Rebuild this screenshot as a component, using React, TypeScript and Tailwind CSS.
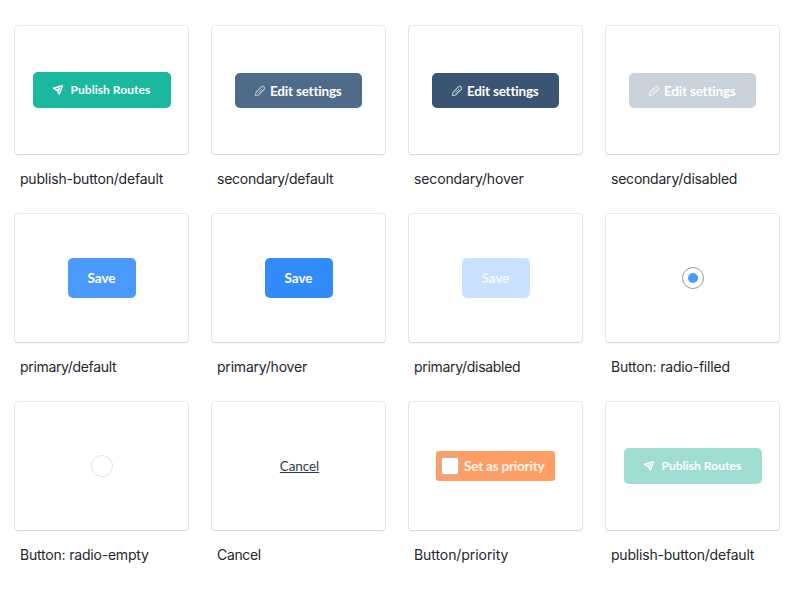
import type { ReactNode } from "react";

function PlaneIcon() {
  return (
    <svg width="12" height="12" viewBox="0 0 12 12" fill="none" stroke="currentColor" strokeWidth="1.5" strokeLinejoin="round" className="shrink-0">
      <path d="M1.5 4.2 10.3 1.7 7.4 10 5.4 6.7Z" />
      <path d="M5.3 6.6 7.8 4.1" />
    </svg>
  );
}

function PencilIcon() {
  return (
    <svg width="12" height="12" viewBox="0 0 12 12" fill="none" stroke="currentColor" strokeWidth="1.15" strokeLinejoin="round" className="shrink-0">
      <path d="M1.4 10.6 2 7.3 7.6 1.7Q8.5 .9 9.5 1.4 10.9 2.2 10.5 3.6 10.4 4.1 10 4.5L4.5 10Z" />
      <path d="M4.2 7.8 8 4" strokeWidth="0.9" />
    </svg>
  );
}

function PublishButton({ color }: { color: string }) {
  return (
    <button className={`flex h-9 w-[138px] items-center rounded-[5px] pl-[19px] font-[Lato,sans-serif] text-[12px] font-bold text-white ${color}`}>
      <PlaneIcon />
      <span className="ml-[7px] whitespace-nowrap tracking-[0.05px]">Publish Routes</span>
    </button>
  );
}

function EditButton({ color, iconColor, textColor = "text-white" }: { color: string; iconColor: string; textColor?: string }) {
  return (
    <button className={`mt-px flex h-[35px] w-[127px] items-center rounded-[5px] pl-[19px] font-[Lato,sans-serif] text-[13.5px] font-bold ${color} ${textColor}`}>
      <span className={iconColor}><PencilIcon /></span>
      <span className="ml-1 pt-0.5 whitespace-nowrap tracking-[-0.2px]">Edit settings</span>
    </button>
  );
}

function SaveButton({ color }: { color: string }) {
  return (
    <button className={`flex h-10 w-[68px] items-center justify-center rounded-[5px] font-[Lato,sans-serif] text-[13.5px] font-bold ${color}`}>
      Save
    </button>
  );
}

const items: { label: string; tracking: string; preview: ReactNode }[] = [
  { label: "publish-button/default", tracking: "tracking-[-0.2px]", preview: <PublishButton color="bg-[#1bb8a0]" /> },
  { label: "secondary/default", tracking: "tracking-[-0.23px]", preview: <EditButton color="bg-[#4f6b8a]" iconColor="text-[#b4c1cb]" /> },
  { label: "secondary/hover", tracking: "tracking-[-0.14px]", preview: <EditButton color="bg-[#3a5573]" iconColor="text-[#b4c4c8]" /> },
  { label: "secondary/disabled", tracking: "tracking-[-0.22px]", preview: <EditButton color="bg-[#cad2dc]" iconColor="text-[#edf1f3]" /> },
  { label: "primary/default", tracking: "tracking-[-0.33px]", preview: <SaveButton color="bg-[#4a9afb] text-white" /> },
  { label: "primary/hover", tracking: "tracking-[-0.2px]", preview: <SaveButton color="bg-[#318bfa] text-white" /> },
  { label: "primary/disabled", tracking: "tracking-[-0.3px]", preview: <SaveButton color="bg-[#c8e1ff] text-[#f6faff]" /> },
  {
    label: "Button: radio-filled",
    tracking: "tracking-[-0.2px]",
    preview: (
      <span className="ml-px flex size-[22px] items-center justify-center rounded-full border border-[#8d9da5]">
        <span className="size-[10px] rounded-full bg-[#4a9afb]" />
      </span>
    ),
  },
  { label: "Button: radio-empty", tracking: "tracking-[-0.2px]", preview: <span className="ml-px size-[22px] rounded-full border border-[#dde3e4]" /> },
  { label: "Cancel", tracking: "tracking-[-0.35px]", preview: <button className="ml-0.5 font-[Lato,sans-serif] text-[13.5px] tracking-[-0.1px] text-[#2e3c49] underline">Cancel</button> },
  {
    label: "Button/priority",
    tracking: "tracking-[-0.07px]",
    preview: (
      <button className="flex h-[30px] w-[119px] items-center rounded-[3px] bg-[#ff9e64] pl-[5px] font-[Lato,sans-serif] text-[13.5px] font-bold text-[#fff5ef]">
        <span className="size-[18px] rounded-[3px] border border-[#a5bdd5] bg-white" />
        <span className="ml-[5px] pt-px whitespace-nowrap tracking-[-0.2px]">Set as priority</span>
      </button>
    ),
  },
  { label: "publish-button/default", tracking: "tracking-[-0.2px]", preview: <PublishButton color="bg-[#9fddd2]" /> },
];

export default function App() {
  return (
    <main className="min-h-[603px] w-[811px] bg-white pt-[26px] pl-[15px]">
      <div className="grid grid-cols-[repeat(4,173px)] gap-x-6 gap-y-[19px]">
        {items.map((item, index) => (
          <figure key={index} className="h-[169px]">
            <div className="flex h-32 items-center justify-center rounded-[3px] bg-white shadow-[0_0_0_1px_rgba(0,0,0,0.07),0_1px_2px_rgba(0,0,0,0.12)]">
              {item.preview}
            </div>
            <figcaption className={`mt-[15px] pl-[5px] font-[Inter,sans-serif] text-[14px] leading-5 whitespace-nowrap text-[#24262d] ${item.tracking}`}>
              {item.label}
            </figcaption>
          </figure>
        ))}
      </div>
    </main>
  );
}
